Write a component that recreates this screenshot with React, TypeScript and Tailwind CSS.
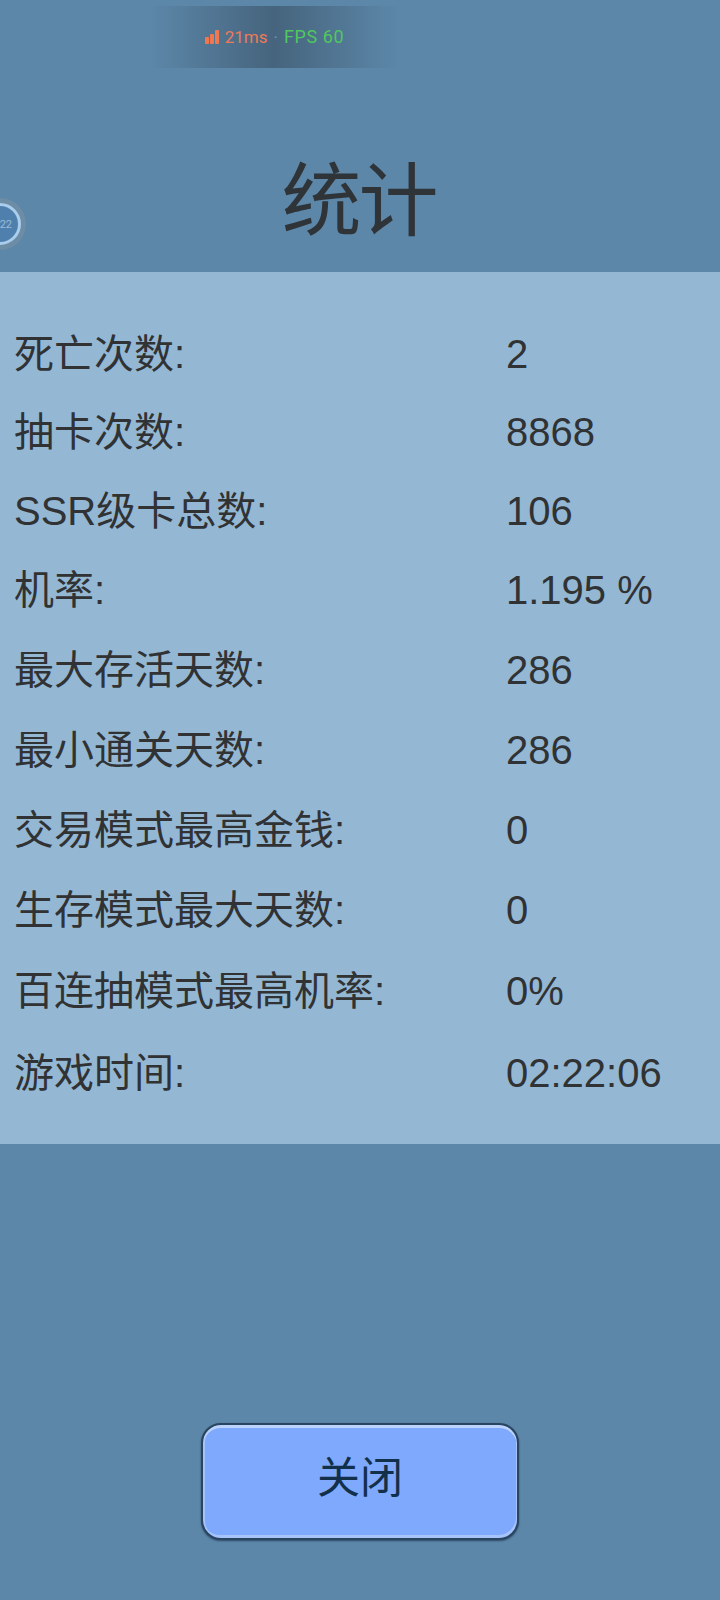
const rows = [
  { label: '死亡次数:', value: '2', height: 'h-[79px]' },
  { label: '抽卡次数:', value: '8868', height: 'h-[78px]' },
  { label: 'SSR级卡总数:', value: '106', height: 'h-[79px]' },
  { label: '机率:', value: '1.195 %', height: 'h-[80px]' },
  { label: '最大存活天数:', value: '286', height: 'h-[80px]' },
  { label: '最小通关天数:', value: '286', height: 'h-[80px]' },
  { label: '交易模式最高金钱:', value: '0', height: 'h-[80px]' },
  { label: '生存模式最大天数:', value: '0', height: 'h-[80px]' },
  { label: '百连抽模式最高机率:', value: '0%', height: 'h-[81px]' },
  { label: '游戏时间:', value: '02:22:06', height: 'h-[84px]' },
];

export default function App() {
  return (
    <div className="relative w-[720px] h-[1600px] overflow-hidden flex flex-col bg-[#5c87a9] font-['Liberation_Sans','Noto_Sans_CJK_SC',sans-serif] text-[#303234]">
      {/* ping overlay */}
      <div className="absolute left-[149px] top-[6px] w-[250px] h-[62px] flex items-center justify-center bg-gradient-to-r from-transparent via-[#46647d] to-transparent font-['Roboto',sans-serif] leading-none">
        <svg width="16" height="16" viewBox="0 0 16 16" className="fill-[#f0774f] mr-[5px]">
          <rect x="1" y="8" width="4" height="7" rx="1" />
          <rect x="6" y="5" width="4" height="10" rx="1" />
          <rect x="11" y="1" width="4" height="14" rx="1" />
        </svg>
        <span className="text-[#ee7a58] text-[17px]">21ms</span>
        <span className="text-[#5f9cb0] text-[17px] mx-[6px]">·</span>
        <span className="text-[#4fc75f] text-[18px] tracking-[0.6px]">FPS 60</span>
      </div>

      {/* float ball */}
      <div className="absolute left-[-26px] top-[198px] w-[52px] h-[52px] rounded-full bg-[#6d8ca6] flex items-center justify-center">
        <div className="w-[42px] h-[42px] rounded-full border-[3px] border-[#a9cdea] bg-[#4f7fad] flex items-center justify-end pr-[6px]">
          <span className="text-[11px] leading-none text-[#9dbbd6] font-['Roboto',sans-serif]">22</span>
        </div>
      </div>

      <div className="h-[272px] shrink-0 flex items-end justify-center pb-[30px]">
        <h1 className="text-[80px] leading-none font-normal tracking-[-3px] text-[#2f3438] mr-[3px]">统计</h1>
      </div>

      <div className="h-[872px] shrink-0 bg-[#94b8d4] pt-[42px] flex flex-col">
        {rows.map((row) => (
          <div key={row.label} className={`${row.height} flex items-center text-[40px] leading-none`}>
            <div className="w-[506px] pl-[14px] shrink-0">{row.label}</div>
            <div>{row.value}</div>
          </div>
        ))}
      </div>

      <div className="flex-1 flex justify-center pt-[279px]">
        <button className="w-[318px] h-[117px] rounded-[20px] border-[2px] border-[#2a4560] bg-[#7ea9fd] shadow-[inset_0_3px_0_#bcd3fb,inset_2px_0_0_#a4c2fb,inset_-1px_-3px_0_#a6c3fa,0_1px_2px_#2f4a68] text-[43px] text-[#12304a] pb-[6px]">
          关闭
        </button>
      </div>
    </div>
  );
}
